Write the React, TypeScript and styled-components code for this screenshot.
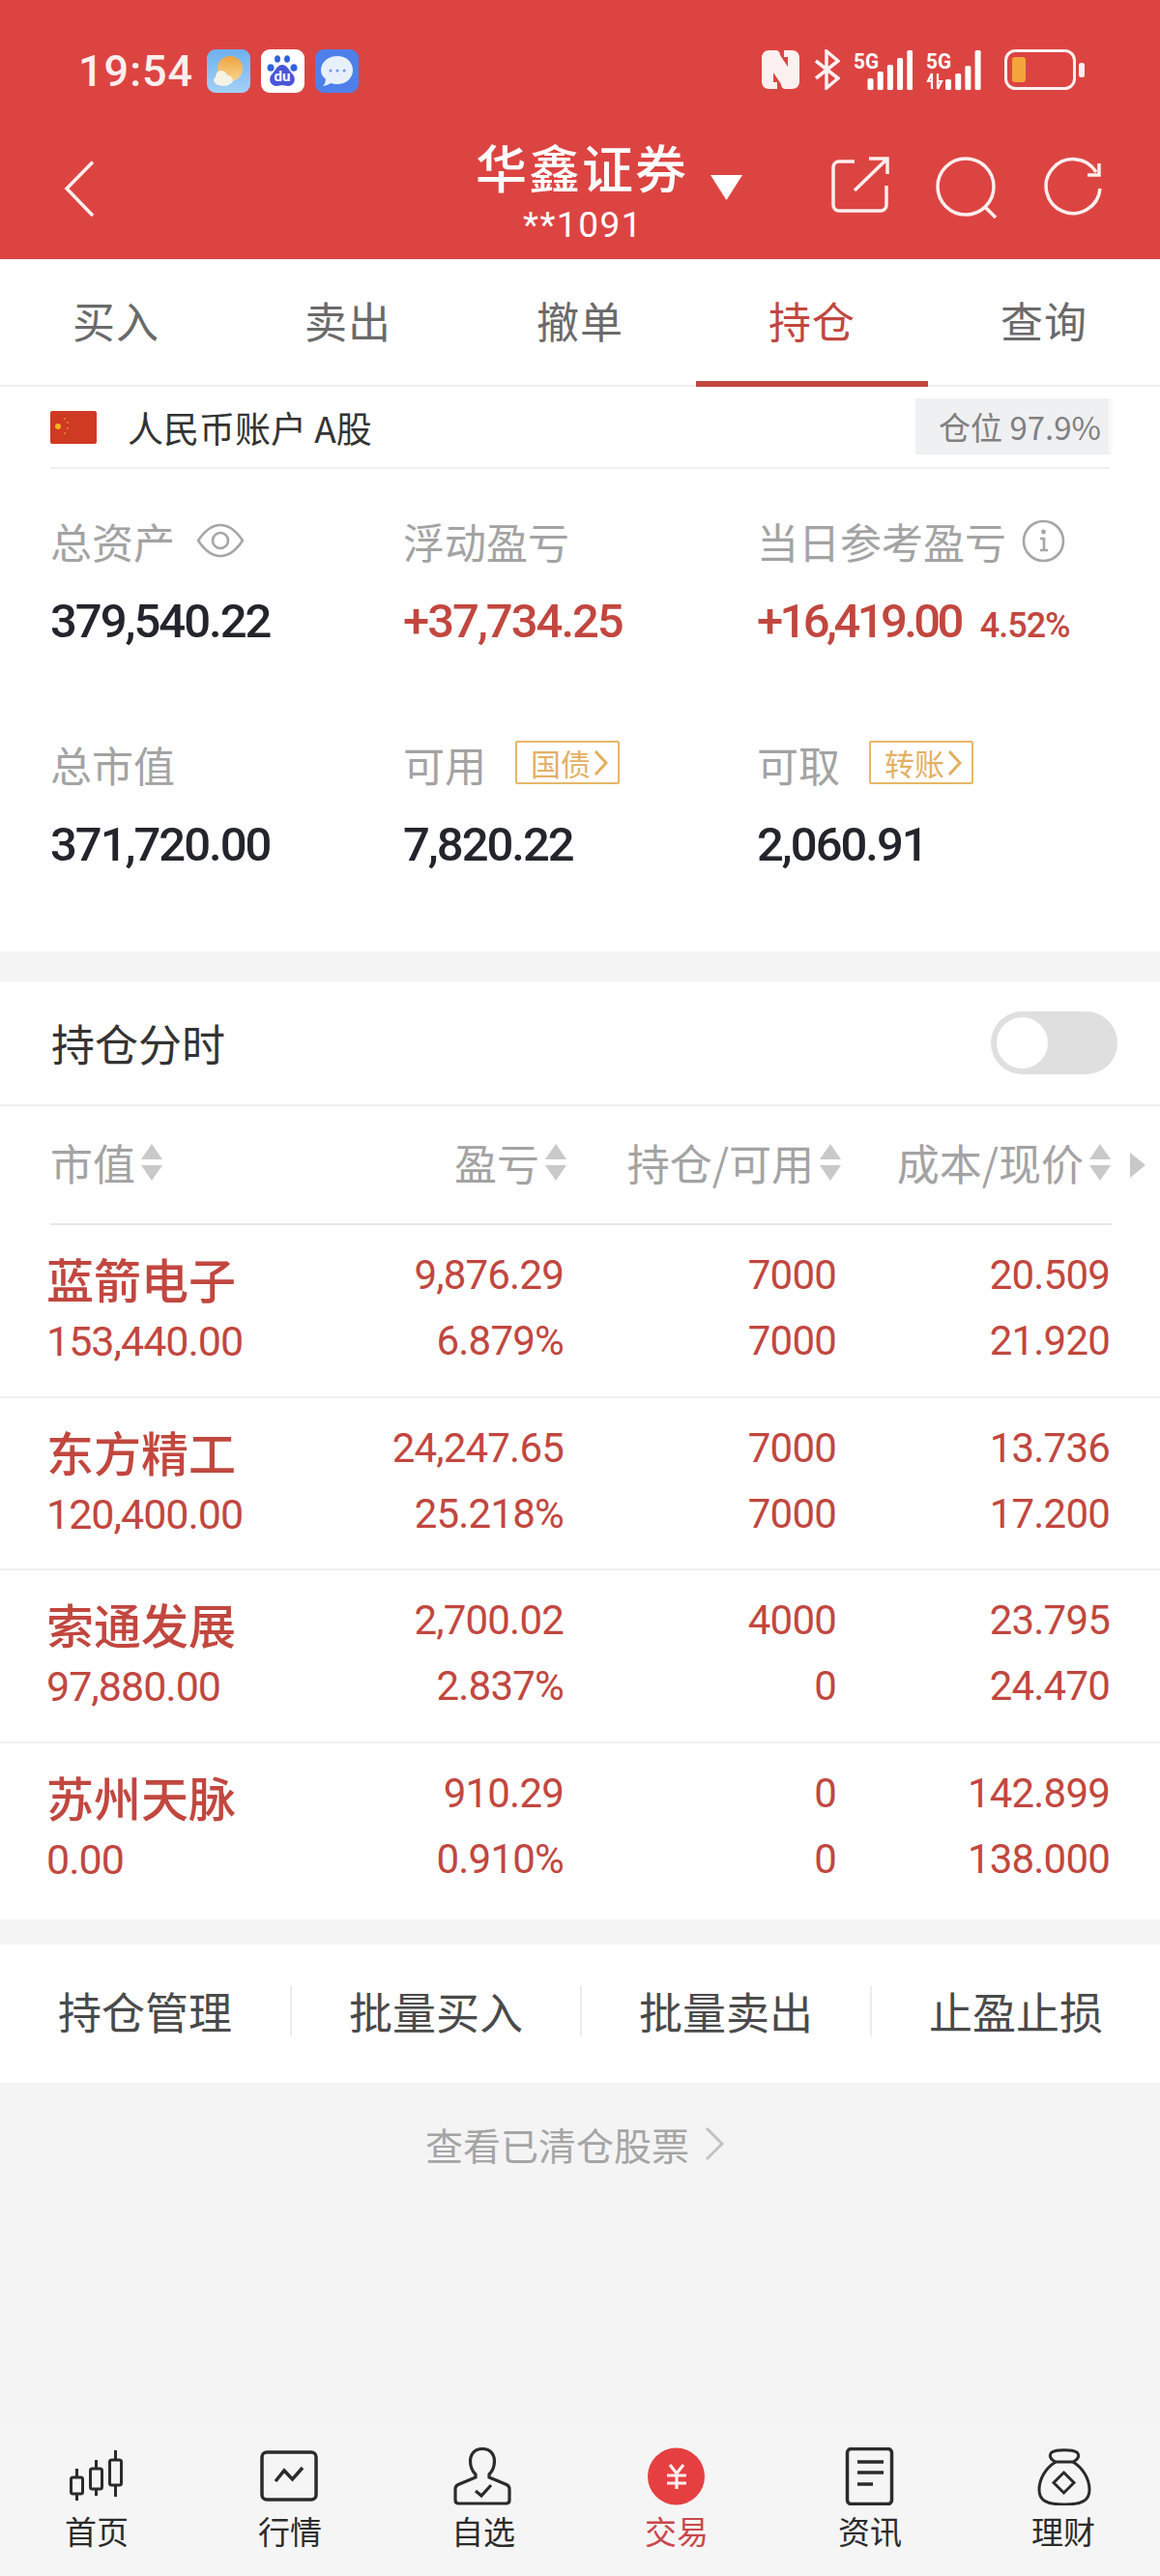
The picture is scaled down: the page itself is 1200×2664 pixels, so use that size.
import styled, { createGlobalStyle } from 'styled-components';

const CJK = '"Noto Sans CJK SC", "Noto Sans", sans-serif';
const NUM = 'Roboto, "Noto Sans CJK SC", sans-serif';
const RED = '#c1473f';

const GlobalStyle = createGlobalStyle`
  html, body { margin: 0; padding: 0; background: #f4f4f4; }
  * { box-sizing: border-box; }
`;

const positions = [
  { name: '蓝箭电子', value: '153,440.00', profit: '9,876.29', rate: '6.879%', hold: '7000', free: '7000', cost: '20.509', price: '21.920' },
  { name: '东方精工', value: '120,400.00', profit: '24,247.65', rate: '25.218%', hold: '7000', free: '7000', cost: '13.736', price: '17.200' },
  { name: '索通发展', value: '97,880.00', profit: '2,700.02', rate: '2.837%', hold: '4000', free: '0', cost: '23.795', price: '24.470' },
  { name: '苏州天脉', value: '0.00', profit: '910.29', rate: '0.910%', hold: '0', free: '0', cost: '142.899', price: '138.000' },
];

const Sort = () => (
  <SortIcon width="24" height="38" viewBox="0 0 24 38">
    <path d="M12 0 L23 16 H1 Z M1 22 H23 L12 38 Z" fill="#c9c9c9" />
  </SortIcon>
);

const Chevron = () => (
  <svg width="15" height="28" viewBox="0 0 15 28" fill="none" stroke="#e4ae5c" strokeWidth="3">
    <path d="M2 2 L13 14 L2 26" />
  </svg>
);

const Signal = ({ bars, arrows }: { bars: number[]; arrows?: boolean }) => (
  <svg width={arrows ? 67 : 61} height="42" viewBox={arrows ? '0 0 67 42' : '0 0 61 42'}>
    <text x="0" y="20" fontFamily="Roboto, sans-serif" fontWeight="700" fontSize="22" fill="#fff" textLength="26" lengthAdjust="spacingAndGlyphs">5G</text>
    {arrows && <path d="M6 25 V41 M6 25 L2 33 H6 M12 41 V25 M12 41 L16 33 H12" stroke="#fff" strokeWidth="2.2" fill="none" />}
    {bars.map((h, i) => (
      <rect key={i} x={(arrows ? 20 : 14.5) + i * 10.2} y={42 - h} width="6" height={h} rx="1.5" fill="#fff" />
    ))}
  </svg>
);

const tabs = [
  {
    label: '首页',
    icon: (
      <g fill="none" stroke="#2b2b2b" strokeWidth="3">
        <rect x="4.5" y="31" width="12" height="17" rx="2" />
        <path d="M10.5 22 V31 M10.5 48 V55" />
        <rect x="24.5" y="22" width="12" height="21" rx="2" />
        <path d="M30.5 13 V22 M30.5 43 V50" />
        <rect x="44.5" y="13" width="12" height="26" rx="2" />
        <path d="M50.5 3 V13 M50.5 39 V51" />
      </g>
    ),
  },
  {
    label: '行情',
    icon: (
      <g fill="none" stroke="#2b2b2b" strokeWidth="3.5">
        <rect x="2" y="5" width="56" height="49" rx="5" />
        <path d="M16 35 L25 24 L33.5 33 L44 21" />
      </g>
    ),
  },
  {
    label: '自选',
    icon: (
      <g fill="none" stroke="#2b2b2b" strokeWidth="3.2">
        <path d="M30 1.5 C22 1.5 17.5 7 17.5 14 C17.5 21 20 25 23 28 V31 L5 38.5 Q2 40 2 43 V54.5 Q2 58 5.5 58 H54.5 Q58 58 58 54.5 V43 Q58 40 55 38.5 L37 31 V28 C40 25 42.5 21 42.5 14 C42.5 7 38 1.5 30 1.5 Z" />
        <path d="M23 45 L29 50 L39 39" />
      </g>
    ),
  },
  {
    label: '交易',
    active: true,
    icon: (
      <g>
        <circle cx="30.5" cy="30" r="29.5" fill="#e63f42" />
        <path d="M24 18 L31 27 L38 18 M21 29 H41 M21 37 H41 M31 27 V43" fill="none" stroke="#fdeeee" strokeWidth="3.2" />
      </g>
    ),
  },
  {
    label: '资讯',
    icon: (
      <g fill="none" stroke="#2b2b2b" strokeWidth="3.5">
        <rect x="7.5" y="1.5" width="46" height="57" rx="4" />
        <path d="M18 15 H45 M18 26 H45 M18 38 H34" />
      </g>
    ),
  },
  {
    label: '理财',
    icon: (
      <g fill="none" stroke="#2b2b2b" strokeWidth="3">
        <path d="M23 15 C12 22 6 33 6 44 C6 55 14 59 32 59 C50 59 58 55 58 44 C58 33 52 22 41 15" />
        <path d="M23 15 C17 12 16 8 19 5 C24 2 40 2 45 5 C48 8 47 12 41 15 Z" />
        <path d="M31.5 26 L42 36.5 L31.5 47 L21 36.5 Z" />
      </g>
    ),
  },
];

export default function App() {
  return (
    <Page>
      <GlobalStyle />
      <Header>
        <StatusBar>
          <StatusLeft>
            <Time>19:54</Time>
            <AppIcon viewBox="0 0 45 45">
              <defs>
                <linearGradient id="wx" x1="0" y1="0" x2="0" y2="1">
                  <stop offset="0" stopColor="#6fb0ee" />
                  <stop offset="1" stopColor="#a3d0f7" />
                </linearGradient>
                <linearGradient id="sun" x1="0" y1="0" x2="0" y2="1">
                  <stop offset="0" stopColor="#f0a23e" />
                  <stop offset="1" stopColor="#f7d78f" />
                </linearGradient>
              </defs>
              <rect width="45" height="45" rx="9" fill="url(#wx)" />
              <circle cx="24" cy="20" r="13" fill="url(#sun)" />
              <ellipse cx="17" cy="32" rx="10" ry="6" fill="#f4f3e6" />
              <circle cx="15" cy="28" r="6" fill="#f4f3e6" />
            </AppIcon>
            <AppIcon viewBox="0 0 45 45">
              <rect width="45" height="45" rx="9" fill="#fff" />
              <g fill="#2f62e0">
                <ellipse cx="17" cy="10" rx="3" ry="3.8" />
                <ellipse cx="27" cy="10" rx="3" ry="3.8" />
                <ellipse cx="10" cy="19" rx="3.5" ry="3.8" />
                <ellipse cx="34" cy="19" rx="3.5" ry="3.8" />
                <path d="M22 16 C27 16 29 22 33 26 C37 31 34 38 28 38 C25 38 24 37 22 37 C20 37 19 38 16 38 C10 38 7 31 11 26 C15 22 17 16 22 16 Z" fill="#4a55d8" />
              </g>
              <text x="22" y="33" textAnchor="middle" fontFamily="Roboto, sans-serif" fontWeight="700" fontSize="15" fill="#fff">du</text>
            </AppIcon>
            <AppIcon viewBox="0 0 45 45">
              <rect width="45" height="45" rx="9" fill="#4f80ea" />
              <path d="M23 7 C32 7 39 13 39 21.5 C39 30 32 36 23 36 C20 36 18 35.5 16 35 Q12 38 8 38 Q11 35 11 31 C7.5 28 6 25 6 21.5 C6 13 14 7 23 7 Z" fill="#e9f0fd" />
              <g fill="#6d93e8">
                <circle cx="16" cy="22" r="1.5" />
                <circle cx="23" cy="22" r="1.5" />
                <circle cx="30" cy="22" r="1.5" />
              </g>
            </AppIcon>
          </StatusLeft>
          <StatusRight>
            <svg width="41" height="42" viewBox="0 0 41 42">
              <path d="M9 1 H15 C18 1 20 3 20 6 L28 18 V8 H24 V1 H32 C37 1 40 4 40 9 V33 C40 38 37 41 32 41 H26 C23 41 21 39 21 36 L13 24 V34 H17 V41 H9 C4 41 1 38 1 33 V9 C1 4 4 1 9 1 Z" fill="#fdf0f0" />
            </svg>
            <svg width="27" height="42" viewBox="0 0 27 42" fill="none" stroke="#fdf0f0" strokeWidth="3.5">
              <path d="M2 12 L25 30 L13 40 V2 L25 12 L2 30" />
            </svg>
            <Signal bars={[12, 19, 26, 33, 41]} />
            <Signal bars={[11, 17, 25, 41]} arrows />
            <svg width="84" height="42" viewBox="0 0 84 42">
              <rect x="1.5" y="1.5" width="71" height="39" rx="10" fill="none" stroke="#fdf0f0" strokeWidth="3" />
              <rect x="8" y="8" width="14" height="26" rx="3" fill="#f4a53c" />
              <rect x="77" y="14" width="6" height="15" rx="2.5" fill="#fdf0f0" />
            </svg>
          </StatusRight>
        </StatusBar>
        <NavBar>
          <NavSide>
            <svg width="32" height="58" viewBox="0 0 32 58" fill="none" stroke="#fdeeee" strokeWidth="3.5">
              <path d="M30 1.5 L3 29 L30 57" />
            </svg>
          </NavSide>
          <TitleBlock>
            <Title>华鑫证券</Title>
            <Account>**1091</Account>
          </TitleBlock>
          <NavActions>
            <Caret />
            <ActionIcons>
              <svg width="60" height="58" viewBox="0 0 60 58" fill="none" stroke="#fdeeee" strokeWidth="3.5">
                <path d="M24 5 H8 A6 6 0 0 0 2 11 V50 A6 6 0 0 0 8 56 H51 A6 6 0 0 0 57 50 V30" />
                <path d="M24 35 L57 3 M39 2 H58 V18" />
              </svg>
              <svg width="66" height="64" viewBox="0 0 66 64" fill="none" stroke="#fdeeee" strokeWidth="3.5">
                <circle cx="32" cy="31" r="29" />
                <path d="M51 51 L63 63" />
              </svg>
              <svg width="60" height="62" viewBox="0 0 60 62" fill="none" stroke="#fdeeee" strokeWidth="3.5">
                <path d="M54 16 A28 28 0 1 0 58 33" />
                <path d="M57 7 V19 H45" />
              </svg>
            </ActionIcons>
          </NavActions>
        </NavBar>
      </Header>

      <Tabs>
        {['买入', '卖出', '撤单', '持仓', '查询'].map((t) => (
          <TabItem key={t} $active={t === '持仓'}>{t}</TabItem>
        ))}
      </Tabs>

      <Summary>
        <AccountRow>
          <AccountName>
            <svg width="48" height="34" viewBox="0 0 48 34">
              <rect width="48" height="34" rx="2" fill="#cf3a22" />
              <circle cx="8" cy="16" r="3" fill="#f5b31d" />
              <g fill="#e5902b">
                <circle cx="15" cy="8" r="1" />
                <circle cx="18" cy="12" r="1" />
                <circle cx="18" cy="18" r="1" />
                <circle cx="15" cy="23" r="1" />
              </g>
            </svg>
            <AccountText>人民币账户 A股</AccountText>
          </AccountName>
          <PositionBadge>仓位 97.9%</PositionBadge>
        </AccountRow>
        <StatGrid>
          <Stat>
            <StatLabel>
              总资产
              <EyeIcon width="50" height="36" viewBox="0 0 50 36" fill="none" stroke="#a6a6a6" strokeWidth="2.6">
                <path d="M2 18 C10 6 17 2 25 2 C33 2 40 6 48 18 C40 30 33 34 25 34 C17 34 10 30 2 18 Z" />
                <circle cx="25" cy="18" r="8" />
              </EyeIcon>
            </StatLabel>
            <StatValue>379,540.22</StatValue>
          </Stat>
          <Stat>
            <StatLabel>浮动盈亏</StatLabel>
            <StatValue $red>+37,734.25</StatValue>
          </Stat>
          <Stat>
            <StatLabel>
              当日参考盈亏
              <InfoIcon width="45" height="45" viewBox="0 0 45 45" fill="none" stroke="#a6a6a6" strokeWidth="2.6">
                <circle cx="22.5" cy="22.5" r="20.5" />
                <circle cx="22.5" cy="13" r="2.4" fill="#a6a6a6" stroke="none" />
                <path d="M19 20 H23 V32 M19 32 H27" />
              </InfoIcon>
            </StatLabel>
            <StatValue $red $tight>
              +16,419.00<StatRate>4.52%</StatRate>
            </StatValue>
          </Stat>
          <Stat>
            <StatLabel>总市值</StatLabel>
            <StatValue>371,720.00</StatValue>
          </Stat>
          <Stat>
            <StatLabel>
              可用
              <Chip>国债<Chevron /></Chip>
            </StatLabel>
            <StatValue>7,820.22</StatValue>
          </Stat>
          <Stat>
            <StatLabel>
              可取
              <Chip>转账<Chevron /></Chip>
            </StatLabel>
            <StatValue>2,060.91</StatValue>
          </Stat>
        </StatGrid>
      </Summary>

      <Holdings>
        <ToggleRow>
          <ToggleLabel>持仓分时</ToggleLabel>
          <Toggle><Knob /></Toggle>
        </ToggleRow>
        <TableHead>
          <HeadCell>市值<Sort /></HeadCell>
          <HeadCell $right>盈亏<Sort /></HeadCell>
          <HeadCell $right>持仓/可用<Sort /></HeadCell>
          <HeadCell $right>成本/现价<Sort /></HeadCell>
          <MoreArrow />
        </TableHead>
        <TableBody>
          {positions.map((p) => (
            <Row key={p.name}>
              <div>
                <StockName>{p.name}</StockName>
                <StockValue>{p.value}</StockValue>
              </div>
              <NumCol>
                <Num>{p.profit}</Num>
                <Num>{p.rate}</Num>
              </NumCol>
              <NumCol>
                <Num>{p.hold}</Num>
                <Num>{p.free}</Num>
              </NumCol>
              <NumCol>
                <Num>{p.cost}</Num>
                <Num>{p.price}</Num>
              </NumCol>
            </Row>
          ))}
        </TableBody>
      </Holdings>

      <Actions>
        {['持仓管理', '批量买入', '批量卖出', '止盈止损'].map((a) => (
          <ActionItem key={a}>{a}</ActionItem>
        ))}
      </Actions>

      <ClearedLink>
        查看已清仓股票
        <svg width="20" height="36" viewBox="0 0 20 36" fill="none" stroke="#c2c2c2" strokeWidth="3">
          <path d="M2 2 L18 18 L2 34" />
        </svg>
      </ClearedLink>

      <BottomNav>
        {tabs.map((t) => (
          <NavItem key={t.label} $active={t.active}>
            <svg width="62" height="60" viewBox="0 0 62 60">{t.icon}</svg>
            <span>{t.label}</span>
          </NavItem>
        ))}
      </BottomNav>
    </Page>
  );
}

const Page = styled.div`
  width: 1200px;
  height: 2664px;
  display: flex;
  flex-direction: column;
  overflow: hidden;
  background: #f4f4f4;
  font-family: ${CJK};
`;

const Header = styled.header`
  height: 268px;
  background: #dc4442;
  color: #fff;
  flex-shrink: 0;
`;

const StatusBar = styled.div`
  height: 146px;
  padding: 51px 77px 0 81px;
  display: flex;
  justify-content: space-between;
  align-items: flex-start;
`;

const StatusLeft = styled.div`
  display: flex;
  align-items: center;
  gap: 11px;
`;

const Time = styled.span`
  width: 122px;
  font: 500 45px/45px ${NUM};
  color: #fdeeee;
  letter-spacing: 1px;
`;

const AppIcon = styled.svg`
  width: 45px;
  height: 45px;
`;

const StatusRight = styled.div`
  display: flex;
  align-items: flex-start;
  gap: 14px;
`;

const NavBar = styled.div`
  display: grid;
  grid-template-columns: 1fr auto 1fr;
  padding: 0 60px 0 66px;
`;

const NavSide = styled.div`
  padding-top: 20px;
`;

const TitleBlock = styled.div`
  display: flex;
  flex-direction: column;
  align-items: center;
  color: #fff;
`;

const Title = styled.div`
  font-size: 53px;
  line-height: 58px;
  font-weight: 500;
  letter-spacing: 2px;
  margin-top: -3px;
  margin-left: -2px;
`;

const Account = styled.div`
  font: 400 37px/44px ${NUM};
  letter-spacing: 1.5px;
  margin-top: 10px;
`;

const NavActions = styled.div`
  display: flex;
  justify-content: space-between;
  padding-left: 23px;
`;

const Caret = styled.div`
  width: 33px;
  height: 26px;
  margin-top: 35px;
  background: #fff;
  clip-path: polygon(0 0, 100% 0, 50% 100%);
`;

const ActionIcons = styled.div`
  display: flex;
  align-items: flex-start;
  gap: 47px;
  padding-top: 16px;
`;

const Tabs = styled.nav`
  height: 132px;
  display: grid;
  grid-template-columns: repeat(5, 240px);
  background: #fff;
  border-bottom: 2px solid #efefef;
  flex-shrink: 0;
`;

const TabItem = styled.div<{ $active?: boolean }>`
  height: 132px;
  display: flex;
  align-items: center;
  justify-content: center;
  font-size: 44px;
  letter-spacing: 1px;
  color: ${(p) => (p.$active ? RED : '#6a6a6a')};
  border-bottom: 6px solid ${(p) => (p.$active ? RED : 'transparent')};
`;

const Summary = styled.section`
  height: 584px;
  padding: 0 52px;
  background: #fff;
  flex-shrink: 0;
`;

const AccountRow = styled.div`
  height: 85px;
  display: flex;
  justify-content: space-between;
  align-items: center;
  border-bottom: 2px solid #efefef;
`;

const AccountName = styled.div`
  display: flex;
  align-items: center;
  gap: 32px;
`;

const AccountText = styled.span`
  font-size: 37px;
  color: #333;
`;

const PositionBadge = styled.div`
  width: 204px;
  height: 58px;
  margin: -1px -3px 0 0;
  display: flex;
  align-items: center;
  justify-content: flex-end;
  padding-right: 8px;
  background: #eff0f2;
  border-right: 4px solid #f9f9fa;
  font-size: 33px;
  color: #808080;
  white-space: nowrap;
`;

const StatGrid = styled.div`
  display: grid;
  grid-template-columns: 365px 366px 1fr;
  grid-auto-rows: 231px;
  padding-top: 44px;
`;

const Stat = styled.div``;

const StatLabel = styled.div`
  height: 60px;
  display: flex;
  align-items: center;
  font-size: 43px;
  color: #a3a3a3;
  white-space: nowrap;
`;

const EyeIcon = styled.svg`
  margin-left: 22px;
`;

const InfoIcon = styled.svg`
  margin-left: 16px;
`;

const Chip = styled.span`
  height: 45px;
  margin-left: 30px;
  padding: 0 10px 0 14px;
  display: inline-flex;
  align-items: center;
  gap: 3px;
  border: 2.5px solid #e7b767;
  border-radius: 2px;
  font-size: 31px;
  color: #e3b064;
  margin-top: -3px;
`;

const StatValue = styled.div<{ $red?: boolean; $tight?: boolean }>`
  margin-top: 25px;
  height: 58px;
  font: 500 49px/58px ${NUM};
  letter-spacing: ${(p) => (p.$tight ? '-3.6px' : '-2px')};
  color: ${(p) => (p.$red ? RED : '#22252b')};
  white-space: nowrap;
`;

const StatRate = styled.span`
  margin-left: 20px;
  font-size: 36px;
  letter-spacing: -1px;
`;

const Holdings = styled.section`
  margin-top: 31px;
  background: #fff;
  flex-shrink: 0;
`;

const ToggleRow = styled.div`
  height: 129px;
  padding: 0 44px 0 53px;
  display: flex;
  align-items: center;
  justify-content: space-between;
  border-bottom: 2px solid #efefef;
`;

const ToggleLabel = styled.span`
  font-size: 45px;
  color: #333;
`;

const Toggle = styled.div`
  width: 131px;
  height: 65px;
  padding: 6px;
  border-radius: 33px;
  background: #dfdfdf;
`;

const Knob = styled.div`
  width: 53px;
  height: 53px;
  border-radius: 50%;
  background: #fff;
`;

const TableHead = styled.div`
  position: relative;
  height: 123px;
  margin: 0 50px 0 52px;
  padding-bottom: 6px;
  display: grid;
  grid-template-columns: 200px 335px 284px 279px;
  align-items: center;
  border-bottom: 2px solid #e8e8e8;
`;

const HeadCell = styled.div<{ $right?: boolean }>`
  display: flex;
  align-items: center;
  justify-content: ${(p) => (p.$right ? 'flex-end' : 'flex-start')};
  gap: 5px;
  font-size: 44px;
  color: #a3a3a3;
  white-space: nowrap;
`;

const SortIcon = styled.svg`
  flex-shrink: 0;
`;

const MoreArrow = styled.div`
  position: absolute;
  right: -35px;
  top: 48px;
  width: 16px;
  height: 26px;
  background: #c9c9c9;
  clip-path: polygon(0 0, 100% 50%, 0 100%);
`;

const TableBody = styled.div`
  height: 718px;
`;

const Row = styled.div`
  height: 178.5px;
  padding: 18px 48px 0 48px;
  display: grid;
  grid-template-columns: 340px 195px 282px 283px;
  border-bottom: 2px solid #f0f0f0;
  color: ${RED};
  &:last-child {
    border-bottom: none;
  }
`;

const NumCol = styled.div`
  text-align: right;
`;

const StockName = styled.div`
  font-size: 49px;
  line-height: 58px;
  font-weight: 500;
  margin-top: 8px;
  margin-bottom: 2px;
`;

const StockValue = styled.div`
  font: 400 43px/68px ${NUM};
  letter-spacing: -1px;
`;

const Num = styled.div`
  font: 400 42px/68px ${NUM};
  letter-spacing: -0.8px;
  height: 68px;
`;

const Actions = styled.div`
  height: 143px;
  margin-top: 26px;
  padding-bottom: 6px;
  display: grid;
  grid-template-columns: repeat(4, 300px);
  align-items: center;
  background: #fff;
  flex-shrink: 0;
`;

const ActionItem = styled.div`
  height: 52px;
  display: flex;
  align-items: center;
  justify-content: center;
  font-size: 45px;
  color: #4a4a4a;
  border-left: 2px solid #ececec;
  &:first-child {
    border-left: none;
  }
`;

const ClearedLink = styled.div`
  flex: 1;
  padding: 37px 0 0 440px;
  display: flex;
  align-items: flex-start;
  gap: 16px;
  font-size: 39px;
  line-height: 52px;
  color: #a5a5a5;
  svg {
    margin-top: 8px;
  }
`;

const BottomNav = styled.nav`
  height: 157px;
  padding-top: 24px;
  display: grid;
  grid-template-columns: repeat(6, 200px);
  background: #f5f5f5;
  flex-shrink: 0;
`;

const NavItem = styled.div<{ $active?: boolean }>`
  display: flex;
  flex-direction: column;
  align-items: center;
  font-size: 33px;
  line-height: 40px;
  color: ${(p) => (p.$active ? '#c9484c' : '#2b2b2b')};
  span {
    margin-top: 6px;
  }
`;
